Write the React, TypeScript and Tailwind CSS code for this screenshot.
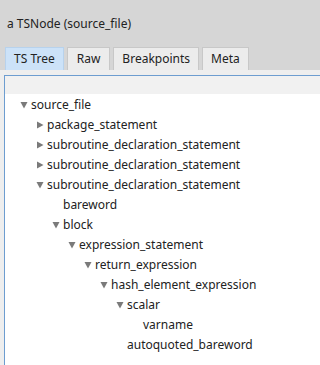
import React from 'react';

type Node = { label: string; depth: number; state: 'open' | 'closed' | 'leaf' };

const nodes: Node[] = [
  { label: 'source_file', depth: 0, state: 'open' },
  { label: 'package_statement', depth: 1, state: 'closed' },
  { label: 'subroutine_declaration_statement', depth: 1, state: 'closed' },
  { label: 'subroutine_declaration_statement', depth: 1, state: 'closed' },
  { label: 'subroutine_declaration_statement', depth: 1, state: 'open' },
  { label: 'bareword', depth: 2, state: 'leaf' },
  { label: 'block', depth: 2, state: 'open' },
  { label: 'expression_statement', depth: 3, state: 'open' },
  { label: 'return_expression', depth: 4, state: 'open' },
  { label: 'hash_element_expression', depth: 5, state: 'open' },
  { label: 'scalar', depth: 6, state: 'open' },
  { label: 'varname', depth: 7, state: 'leaf' },
  { label: 'autoquoted_bareword', depth: 6, state: 'leaf' },
];

function Arrow({ open }: { open: boolean }) {
  return (
    <svg width="8" height="8" viewBox="0 0 8 8" className="shrink-0 ml-[1px]">
      {open ? <path d="M0.5 1 L7.5 1 L4 7.5 Z" fill="#7a7a7a" /> : <path d="M1 0.5 L7.5 4 L1 7.5 Z" fill="#7a7a7a" />}
    </svg>
  );
}

const tabs = [
  { label: 'TS Tree', pad: 'px-[8px]' },
  { label: 'Raw', pad: 'px-[9px]' },
  { label: 'Breakpoints', pad: 'px-[8px]' },
  { label: 'Meta', pad: 'px-[8px]' },
];

export default function App() {
  return (
    <div className="w-full min-w-[275px] h-screen min-h-[365px] overflow-hidden bg-[#d6d6d6] font-['Noto_Sans',sans-serif] text-[12px] text-[#222]">
      {/* Title */}
      <div className="h-[47px] pl-[7px] pt-[14px] leading-[20px]">a TSNode (source_file)</div>

      {/* Tabs */}
      <div className="flex h-[23px] pl-[5px] gap-[3px]">
        {tabs.map((t, i) => (
          <div
            key={t.label}
            className={
              i === 0
                ? `h-full ${t.pad} flex items-center bg-[#cce2f8] border-t border-l border-r border-[#b8d2ec]`
                : `h-full ${t.pad} flex items-center bg-[#ececec] border-t border-l border-r border-[#c8c8c8]`
            }
          >
            {t.label}
          </div>
        ))}
      </div>

      {/* Panel */}
      <div className="bg-[#eeeeee] pl-[4px] pt-[5px] h-full">
        <div className="border-t border-l border-[#6d9dd0] bg-white h-full">
          <div className="h-[18px] bg-[#f1f1f1]" />
          <div className="pt-[1px]">
            {nodes.map((n, i) => (
              <div key={i} className="h-[20px] flex items-center" style={{ paddingLeft: 14 + n.depth * 16 }}>
                <div className="w-[12px] flex items-center">
                  {n.state !== 'leaf' && <Arrow open={n.state === 'open'} />}
                </div>
                <span className="whitespace-nowrap leading-[20px]">{n.label}</span>
              </div>
            ))}
          </div>
        </div>
      </div>
    </div>
  );
}
